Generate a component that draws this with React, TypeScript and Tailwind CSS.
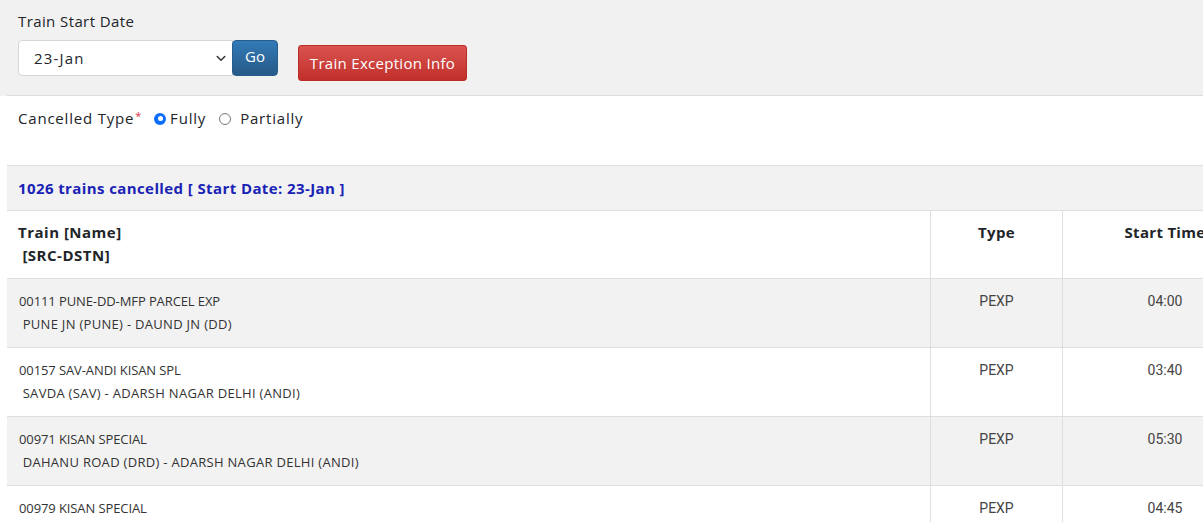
import React from 'react';

const rows = [
  { no: '00111 PUNE-DD-MFP PARCEL EXP', route: 'PUNE JN (PUNE) - DAUND JN (DD)', type: 'PEXP', time: '04:00' },
  { no: '00157 SAV-ANDI KISAN SPL', route: 'SAVDA (SAV) - ADARSH NAGAR DELHI (ANDI)', type: 'PEXP', time: '03:40' },
  { no: '00971 KISAN SPECIAL', route: 'DAHANU ROAD (DRD) - ADARSH NAGAR DELHI (ANDI)', type: 'PEXP', time: '05:30' },
  { no: '00979 KISAN SPECIAL', route: 'DAHANU ROAD (DRD) - ADARSH NAGAR DELHI (ANDI)', type: 'PEXP', time: '04:45' },
];

const App = () => {
  return (
    <div className="w-[1203px] h-[522px] overflow-hidden bg-white text-[#212529] font-['Open_Sans',sans-serif]">
      <div className="bg-[#f1f1f1] pt-[10px]">
        <div className="pl-[18px] text-[15px] leading-[22px] tracking-[0.4px]">Train Start Date</div>
        <div className="flex items-start pl-[18px] pt-[8px] pb-[14px]">
          <div className="flex h-[36px]">
            <div className="w-[215px] h-[36px] bg-white border border-[#d6d6d6] rounded-l-[4px] flex items-center justify-between pl-[15px] pr-[5px] text-[15px] tracking-[1.2px]">
              <span>23-Jan</span>
              <svg width="12" height="12" viewBox="0 0 16 16" fill="none" stroke="#333" strokeWidth="2" strokeLinecap="round" strokeLinejoin="round">
                <path d="M3 6l5 5 5-5" />
              </svg>
            </div>
            <button className="w-[46px] h-[36px] rounded-[4px] border border-[#285e8e] bg-gradient-to-b from-[#337ab7] to-[#265a88] text-white text-[15px] -ml-[1px] pb-[3px]">
              Go
            </button>
          </div>
          <button className="ml-[20px] mt-[5px] w-[169px] h-[36px] rounded-[3px] border border-[#b92c28] bg-gradient-to-b from-[#d9534f] to-[#c12e2a] text-white text-[15px] tracking-[0.3px]">
            Train Exception Info
          </button>
        </div>
        <div className="ml-[7px] border-b border-[#dcdcdc]" />
      </div>

      <div className="flex items-center pl-[18px] h-[45px] text-[15px] tracking-[0.8px]">
        <span>Cancelled Type</span>
        <span className="text-[#dc3545] text-[11px] self-start mt-[12px] ml-[1px]">*</span>
        <span className="ml-[12px] w-[12px] h-[12px] rounded-full bg-[#0d6efd] flex items-center justify-center">
          <span className="w-[5px] h-[5px] rounded-full bg-white" />
        </span>
        <span className="ml-[4px]">Fully</span>
        <span className="ml-[13px] w-[12px] h-[12px] rounded-full border border-[#777] bg-white" />
        <span className="ml-[9px]">Partially</span>
      </div>

      <div className="ml-[7px] mt-[24px] w-[1260px]">
        <div className="h-[46px] bg-[#f2f2f2] border-y border-[#dedede] flex items-center pl-[11px] text-[15px] font-bold tracking-[0.4px] text-[#1a23b5]">
          1026 trains cancelled [ Start Date: 23-Jan ]
        </div>
        <div className="grid grid-cols-[923px_132px_205px]">
          <div className="h-[68px] border-b border-[#dedede] pl-[11px] pt-[10px] text-[15px] font-bold leading-[23px] tracking-[0.5px]">
            <div>Train [Name]</div>
            <div>&nbsp;[SRC-DSTN]</div>
          </div>
          <div className="h-[68px] border-b border-l border-[#dedede] pt-[10px] text-[15px] font-bold leading-[23px] tracking-[0.3px] text-center">Type</div>
          <div className="h-[68px] border-b border-l border-[#dedede] pt-[10px] text-[15px] font-bold leading-[23px] tracking-[0.3px] text-center">Start Time</div>
          {rows.map((r, i) => (
            <React.Fragment key={r.no}>
              <div className={`h-[69px] border-b border-[#dedede] pl-[12px] pt-[11px] text-[13px] leading-[23px] tracking-[0.2px] text-[#333] ${i % 2 === 0 ? 'bg-[#f2f2f2]' : 'bg-white'}`}>
                <div className="tracking-[-0.1px]">{r.no}</div>
                <div className="tracking-[0.3px]">&nbsp;{r.route}</div>
              </div>
              <div className={`h-[69px] border-b border-l border-[#dedede] pt-[11px] text-[14px] leading-[23px] text-[#444] text-center font-['Roboto',sans-serif] ${i % 2 === 0 ? 'bg-[#f2f2f2]' : 'bg-white'}`}>
                {r.type}
              </div>
              <div className={`h-[69px] border-b border-l border-[#dedede] pt-[11px] text-[14px] leading-[23px] text-[#444] text-center font-['Roboto',sans-serif] ${i % 2 === 0 ? 'bg-[#f2f2f2]' : 'bg-white'}`}>
                {r.time}
              </div>
            </React.Fragment>
          ))}
        </div>
      </div>
    </div>
  );
};

export default App;
